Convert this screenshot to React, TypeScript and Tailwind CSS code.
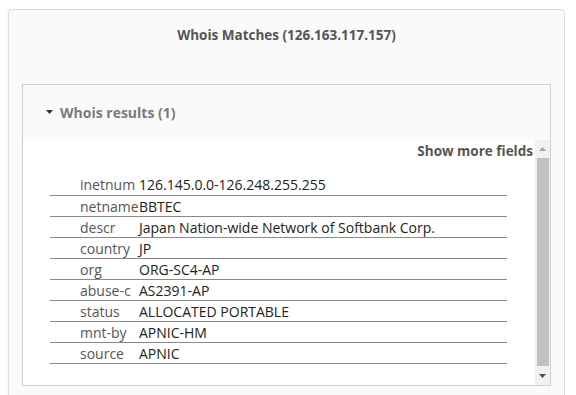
const rows: [string, string][] = [
  ["inetnum", "126.145.0.0-126.248.255.255"],
  ["netname", "BBTEC"],
  ["descr", "Japan Nation-wide Network of Softbank Corp."],
  ["country", "JP"],
  ["org", "ORG-SC4-AP"],
  ["abuse-c", "AS2391-AP"],
  ["status", "ALLOCATED PORTABLE"],
  ["mnt-by", "APNIC-HM"],
  ["source", "APNIC"],
];

const Scrollbar = () => (
  <div className="w-[15px] shrink-0 bg-[#f1f1f1] flex flex-col items-center">
    <div className="h-[18px] flex items-center justify-center">
      <svg width="7" height="4" viewBox="0 0 7 4">
        <path d="M0 4 L3.5 0 L7 4 Z" fill="#a3a3a3" />
      </svg>
    </div>
    <div className="w-[12px] flex-1 bg-[#c1c1c1]" />
    <div className="h-[19px] flex items-center justify-center">
      <svg width="7" height="4" viewBox="0 0 7 4">
        <path d="M0 0 L7 0 L3.5 4 Z" fill="#505050" />
      </svg>
    </div>
  </div>
);

const App = () => {
  return (
    <div
      className="h-[395px] overflow-hidden bg-white pt-[9px] pl-[8px] pr-[11px]"
      style={{ fontFamily: '"Open Sans", "Liberation Sans", sans-serif' }}
    >
      <div className="h-[420px] border border-[#dcdcdc] rounded-[4px] bg-[#fafafa] shadow-[-2px_0_2px_rgba(0,0,0,0.03)]">
        <h2 className="pt-[15px] h-[74px] text-center text-[13.5px] leading-[20px] font-bold text-[#555]">
          Whois Matches (126.163.117.157)
        </h2>

        <div className="mx-[13px] border border-[#cfcfcf] bg-[#fafafa]">
          <div className="h-[55px] flex items-center pl-[23px] pb-[1px] gap-[7px]">
            <svg width="7" height="4" viewBox="0 0 7 4">
              <path d="M0 0 L7 0 L3.5 4 Z" fill="#333" />
            </svg>
            <span className="text-[14px] font-bold text-[#7a7a7a]">Whois results (1)</span>
          </div>

          <div className="h-[245px] bg-white flex">
            <div className="flex-1">
              <div className="text-right pr-[2px] pt-[2px] text-[13.5px] leading-[18px] font-bold text-[#555]">
                Show more fields
              </div>
              <table className="ml-[27px] mt-[14px] w-[457px] border-collapse text-[14px]">
                <tbody>
                  {rows.map(([k, v]) => (
                    <tr key={k} className="h-[21px] border-b border-[#8a8a8a]">
                      <td className="pl-[30px] pt-[2px] w-[89px] text-[#555] leading-[18px] whitespace-nowrap">{k}</td>
                      <td className="pt-[2px] text-[#222] leading-[18px] whitespace-nowrap">{v}</td>
                    </tr>
                  ))}
                </tbody>
              </table>
            </div>
            <Scrollbar />
          </div>
        </div>
      </div>
    </div>
  );
};

export default App;
